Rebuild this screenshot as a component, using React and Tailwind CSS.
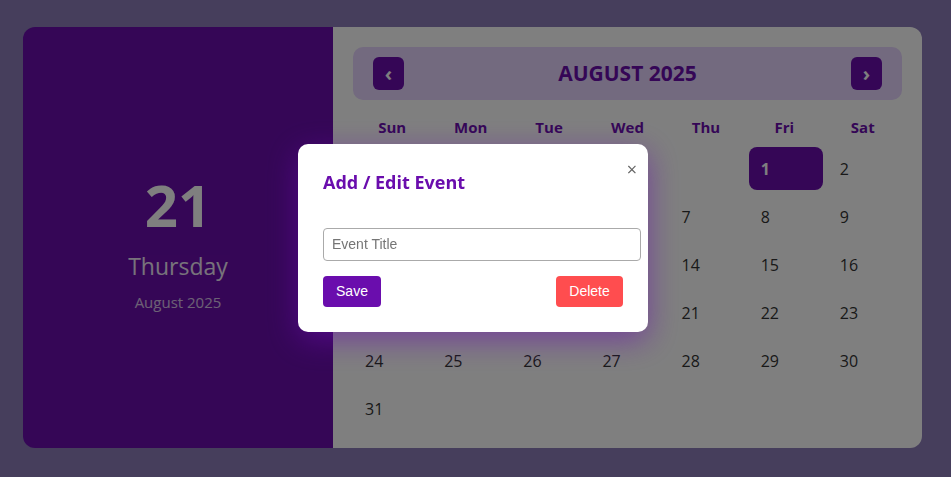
import React from "react";

const days = ["Sun", "Mon", "Tue", "Wed", "Thu", "Fri", "Sat"];

export default function App() {
  const cells = [];
  for (let i = 0; i < 5; i++) cells.push(null);
  for (let d = 1; d <= 31; d++) cells.push(d);

  return (
    <div className="relative min-h-[477px] w-full bg-[#8c7cb8] pl-[23px] pt-[27px] font-['Open_Sans',sans-serif]">
      <div className="flex h-[421px] w-[899px] overflow-hidden rounded-[12px]">
        <div className="flex w-[310px] flex-col items-center justify-center bg-[#6a0dad] pt-[10px] text-white">
          <div className="text-[58px] font-bold leading-[58px]">21</div>
          <div className="mt-[21px] text-[23px] leading-[23px] opacity-90">Thursday</div>
          <div className="mt-[17px] text-[15px] leading-[15px] opacity-75">August 2025</div>
        </div>
        <div className="flex-1 bg-white p-[20px]">
          <div className="flex h-[53px] items-center justify-between rounded-[10px] bg-[#e6d4ff] px-[20px]">
            <button className="flex h-[33px] w-[31px] items-center justify-center rounded-[6px] bg-[#6a0dad] text-[20px] font-bold leading-none text-white">
              ‹
            </button>
            <div className="text-[21px] font-bold text-[#6a0dad]">AUGUST 2025</div>
            <button className="flex h-[33px] w-[31px] items-center justify-center rounded-[6px] bg-[#6a0dad] text-[20px] font-bold leading-none text-white">
              ›
            </button>
          </div>
          <div className="mt-[12px] grid grid-cols-7">
            {days.map((d) => (
              <div key={d} className="py-[5px] text-center text-[15px] font-bold leading-[20px] text-[#6a0dad]">
                {d}
              </div>
            ))}
          </div>
          <div className="mt-[5px] grid grid-cols-7 gap-[5px]">
            {cells.map((d, i) =>
              d === null ? (
                <div key={i} className="h-[43px]" />
              ) : d === 1 ? (
                <div key={i} className="flex h-[43px] items-center rounded-[8px] bg-[#6a0dad] px-[12px] text-[16px] font-bold text-white">
                  {d}
                </div>
              ) : (
                <div key={i} className="flex h-[43px] items-center px-[12px] text-[16px] text-[#333]">
                  {d}
                </div>
              )
            )}
          </div>
        </div>
      </div>

      <div className="fixed inset-0 flex items-center justify-center bg-black/50 pb-[2px] pr-[5px]">
        <div className="relative w-[350px] rounded-[10px] bg-white p-[25px] shadow-[0_8px_30px_rgba(106,13,173,0.55)]">
          <button className="absolute right-[11px] top-[16px] text-[18px] leading-none text-[#666]">×</button>
          <div className="text-[18px] font-bold leading-[26px] text-[#6a0dad]">Add / Edit Event</div>
          <input
            placeholder="Event Title"
            className="mt-[33px] box-content h-[31px] w-[300px] rounded-[4px] border border-[#aaa] px-[8px] font-['Liberation_Sans',Arial,sans-serif] text-[14px] outline-none placeholder:text-[#757575]"
          />
          <div className="mt-[15px] flex justify-between font-['Liberation_Sans',Arial,sans-serif]">
            <button className="h-[31px] w-[58px] rounded-[4px] bg-[#6a0dad] text-[14px] text-white">Save</button>
            <button className="h-[31px] w-[67px] rounded-[4px] bg-[#ff4d4f] text-[14px] text-white">Delete</button>
          </div>
        </div>
      </div>
    </div>
  );
}
